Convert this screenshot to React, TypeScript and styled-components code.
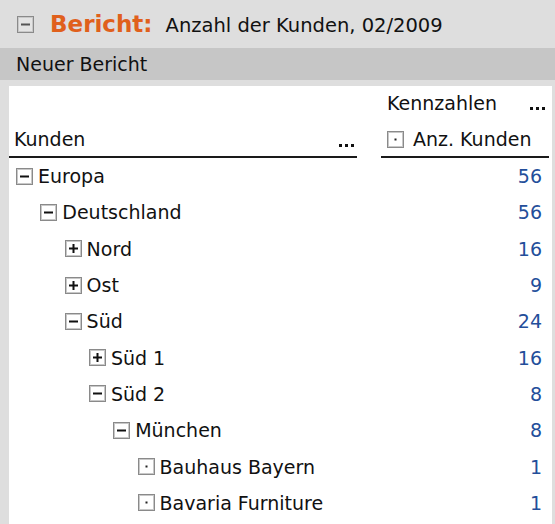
import React from 'react';
import styled, { createGlobalStyle } from 'styled-components';

type Kind = 'minus' | 'plus' | 'leaf';

interface Node {
  label: string;
  level: number;
  kind: Kind;
  value: number;
}

const rows: Node[] = [
  { label: 'Europa', level: 0, kind: 'minus', value: 56 },
  { label: 'Deutschland', level: 1, kind: 'minus', value: 56 },
  { label: 'Nord', level: 2, kind: 'plus', value: 16 },
  { label: 'Ost', level: 2, kind: 'plus', value: 9 },
  { label: 'Süd', level: 2, kind: 'minus', value: 24 },
  { label: 'Süd 1', level: 3, kind: 'plus', value: 16 },
  { label: 'Süd 2', level: 3, kind: 'minus', value: 8 },
  { label: 'München', level: 4, kind: 'minus', value: 8 },
  { label: 'Bauhaus Bayern', level: 5, kind: 'leaf', value: 1 },
  { label: 'Bavaria Furniture', level: 5, kind: 'leaf', value: 1 },
];

const Toggle = ({ kind, muted }: { kind: Kind; muted?: boolean }) => (
  <ToggleBox width="17" height="17" viewBox="0 0 17 17">
    <rect x="0.5" y="0.5" width="16" height="16" fill={muted ? '#e4e4e4' : '#fff'} stroke="#8a8a8a" />
    <rect x="1.5" y="1.5" width="14" height="14" fill="none" stroke="#c8c8c8" />
    {kind !== 'leaf' && <rect x="4" y="7.5" width="9" height="2" fill={muted ? '#555' : '#111'} />}
    {kind === 'plus' && <rect x="7.5" y="4" width="2" height="9" fill="#111" />}
    {kind === 'leaf' && <rect x="7.5" y="7.5" width="2" height="2" fill="#222" />}
  </ToggleBox>
);

const Dots = () => (
  <DotsBox>
    <i />
    <i />
    <i />
  </DotsBox>
);

const App = () => (
  <Page>
    <GlobalStyle />
    <TitleRow>
      <Toggle kind="minus" muted />
      <ReportLabel>Bericht:</ReportLabel>
      <ReportName>Anzahl der Kunden, 02/2009</ReportName>
    </TitleRow>
    <Bar>Neuer Bericht</Bar>
    <Panel>
      <Grid>
        <HeadLeft>
          <span>Kunden</span>
          <Dots />
        </HeadLeft>
        <HeadRight>
          <HeadLine>
            <span>Kennzahlen</span>
            <Dots />
          </HeadLine>
          <HeadLine>
            <Toggle kind="leaf" />
            <MeasureName>Anz. Kunden</MeasureName>
          </HeadLine>
        </HeadRight>
        {rows.map((r) => (
          <React.Fragment key={r.label}>
            <NameCell $level={r.level}>
              <Toggle kind={r.kind} />
              <span>{r.label}</span>
            </NameCell>
            <ValueCell>{r.value}</ValueCell>
          </React.Fragment>
        ))}
      </Grid>
    </Panel>
  </Page>
);
export default App;

const GlobalStyle = createGlobalStyle`
  html, body {
    margin: 0;
    background: #dedede;
  }
  body {
    font-family: "DejaVu Sans", Verdana, sans-serif;
    font-size: 19px;
    color: #111;
  }
`;

const Page = styled.div`
  width: 555px;
  height: 524px;
  overflow: hidden;
  display: flex;
  flex-direction: column;
`;

const ToggleBox = styled.svg`
  display: block;
  flex: none;
`;

const DotsBox = styled.span`
  display: inline-flex;
  gap: 3px;
  i {
    display: block;
    width: 3px;
    height: 3px;
    background: #111;
  }
`;

const TitleRow = styled.div`
  height: 48px;
  display: flex;
  align-items: center;
  padding-left: 17px;
  svg {
    margin-right: 16px;
  }
`;

const ReportLabel = styled.span`
  font-size: 23px;
  font-weight: bold;
  color: #e0601c;
  margin-right: 13px;
`;

const ReportName = styled.span`
  font-size: 19.5px;
  padding-top: 2px;
`;

const Bar = styled.div`
  height: 32px;
  background: #c6c6c6;
  display: flex;
  align-items: center;
  padding-left: 16px;
`;

const Panel = styled.div`
  flex: 1;
  margin: 6px 3px 0 9px;
  background: #fff;
`;

const Grid = styled.div`
  display: grid;
  grid-template-columns: 348px 168px;
  grid-template-rows: 72px;
  grid-auto-rows: 36.3px;
  column-gap: 24px;
`;

const HeadLeft = styled.div`
  border-bottom: 2px solid #1a1a1a;
  display: flex;
  align-items: flex-end;
  justify-content: space-between;
  padding: 0 3px 7px 5px;
  span:first-child {
    line-height: 20px;
  }
  ${DotsBox} {
    margin-bottom: 2px;
  }
`;

const HeadRight = styled.div`
  border-bottom: 2px solid #1a1a1a;
  display: grid;
  grid-template-rows: 34px 38px;
  padding: 0 4px 0 6px;
`;

const HeadLine = styled.div`
  display: flex;
  align-items: center;
  justify-content: space-between;
  svg {
    margin-right: 9px;
  }
  &:first-child ${DotsBox} {
    margin-top: 10px;
  }
`;

const MeasureName = styled.span`
  flex: 1;
`;

const NameCell = styled.div<{ $level: number }>`
  display: flex;
  align-items: center;
  gap: 5px;
  padding-left: ${(p) => 7 + p.$level * 24.3}px;
  white-space: nowrap;
`;

const ValueCell = styled.div`
  display: flex;
  align-items: center;
  justify-content: flex-end;
  padding-right: 7px;
  color: #234e9a;
`;
